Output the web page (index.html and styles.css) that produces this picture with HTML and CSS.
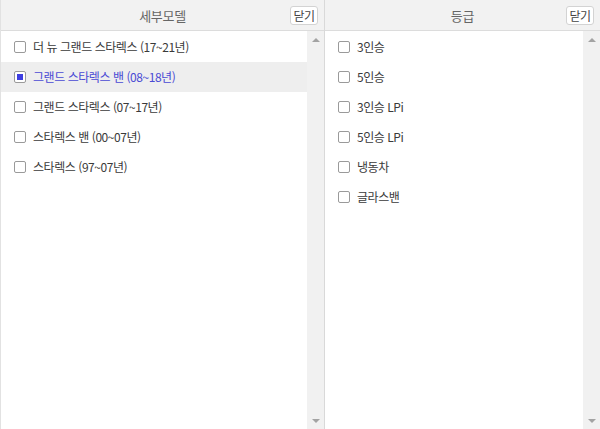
FILE: index.html
```html
<!DOCTYPE html>
<html lang="ko">
<head>
    <meta charset="UTF-8">
    <title>모델 선택</title>
    <link rel="stylesheet" href="styles.css">
</head>
<body>
    <!-- 세부모델 -->
    <section class="panel panel-left">
        <div class="panel-head">
            <span></span>
            <h2>세부모델</h2>
            <button class="btn-close">닫기</button>
        </div>
        <div class="panel-body">
            <ul class="opt-list">
                <li><span class="chk"></span>더 뉴 그랜드 스타렉스 (17~21년)</li>
                <li class="on"><span class="chk"></span>그랜드 스타렉스 밴 (08~18년)</li>
                <li><span class="chk"></span>그랜드 스타렉스 (07~17년)</li>
                <li><span class="chk"></span>스타렉스 밴 (00~07년)</li>
                <li><span class="chk"></span>스타렉스 (97~07년)</li>
            </ul>
            <div class="scroll">
                <span class="arr up"></span>
                <span class="arr down"></span>
            </div>
        </div>
    </section>

    <!-- 등급 -->
    <section class="panel panel-right">
        <div class="panel-head">
            <span></span>
            <h2>등급</h2>
            <button class="btn-close">닫기</button>
        </div>
        <div class="panel-body">
            <ul class="opt-list">
                <li><span class="chk"></span>3인승</li>
                <li><span class="chk"></span>5인승</li>
                <li><span class="chk"></span>3인승 LPi</li>
                <li><span class="chk"></span>5인승 LPi</li>
                <li><span class="chk"></span>냉동차</li>
                <li><span class="chk"></span>글라스밴</li>
            </ul>
            <div class="scroll">
                <span class="arr up"></span>
                <span class="arr down"></span>
            </div>
        </div>
    </section>
</body>
</html>
```
FILE: styles.css
```css
/* 기본 */
body, html {
    margin: 0;
    padding: 0;
    height: 100%;
    overflow: hidden;
    font-family: "Noto Sans CJK KR", "Noto Sans", sans-serif;
    color: #333;
}

body {
    display: flex;
    background: #fff;
}

/* 패널 */
.panel {
    display: flex;
    flex-direction: column;
    height: 429px;
}

.panel-left {
    width: 323px;
    border-left: 1px solid #e2e2e2;
    border-right: 1px solid #d9d9d9;
}

.panel-right {
    flex: 1;
}

/* 헤더 */
.panel-head {
    height: 30px;
    display: grid;
    grid-template-columns: 1fr auto 1fr;
    align-items: center;
    background: #f2f2f2;
    border-bottom: 1px solid #dcdcdc;
}

.panel-head h2 {
    margin: 0;
    font-size: 13px;
    font-weight: normal;
    color: #666;
    letter-spacing: -0.3px;
}

.btn-close {
    justify-self: end;
    margin-right: 6px;
    width: 28px;
    height: 19px;
    padding: 0;
    font-family: inherit;
    font-size: 12px;
    line-height: 17px;
    letter-spacing: -0.5px;
    color: #444;
    background: #fff;
    border: 1px solid #d3d3d3;
    border-radius: 3px;
}

/* 목록 */
.panel-body {
    flex: 1;
    display: flex;
}

.opt-list {
    flex: 1;
    list-style: none;
    margin: 0;
    padding: 1px 0 0;
}

.opt-list li {
    height: 30px;
    display: flex;
    align-items: center;
    gap: 7px;
    padding-left: 13px;
    padding-bottom: 1px;
    box-sizing: border-box;
    font-size: 12px;
    letter-spacing: -0.45px;
    color: #3a3a3a;
}

.opt-list li.on {
    background: #eeeeee;
    color: #4a4ad4;
}

.chk {
    box-sizing: border-box;
    width: 12px;
    height: 12px;
    border: 1px solid #9a9a9a;
    border-radius: 2px;
    background: #fff;
    display: flex;
    align-items: center;
    justify-content: center;
}

.on .chk::after {
    content: "";
    width: 6px;
    height: 6px;
    background: #3d3de0;
}

/* 스크롤바 */
.scroll {
    width: 17px;
    background: #f1f1f1;
    display: flex;
    flex-direction: column;
    justify-content: space-between;
    align-items: center;
    padding: 7px 0 6px;
}

.arr {
    width: 0;
    height: 0;
    border-left: 4px solid transparent;
    border-right: 4px solid transparent;
}

.arr.up {
    border-bottom: 4px solid #a3a3a3;
}

.arr.down {
    border-top: 4px solid #a3a3a3;
}
```
